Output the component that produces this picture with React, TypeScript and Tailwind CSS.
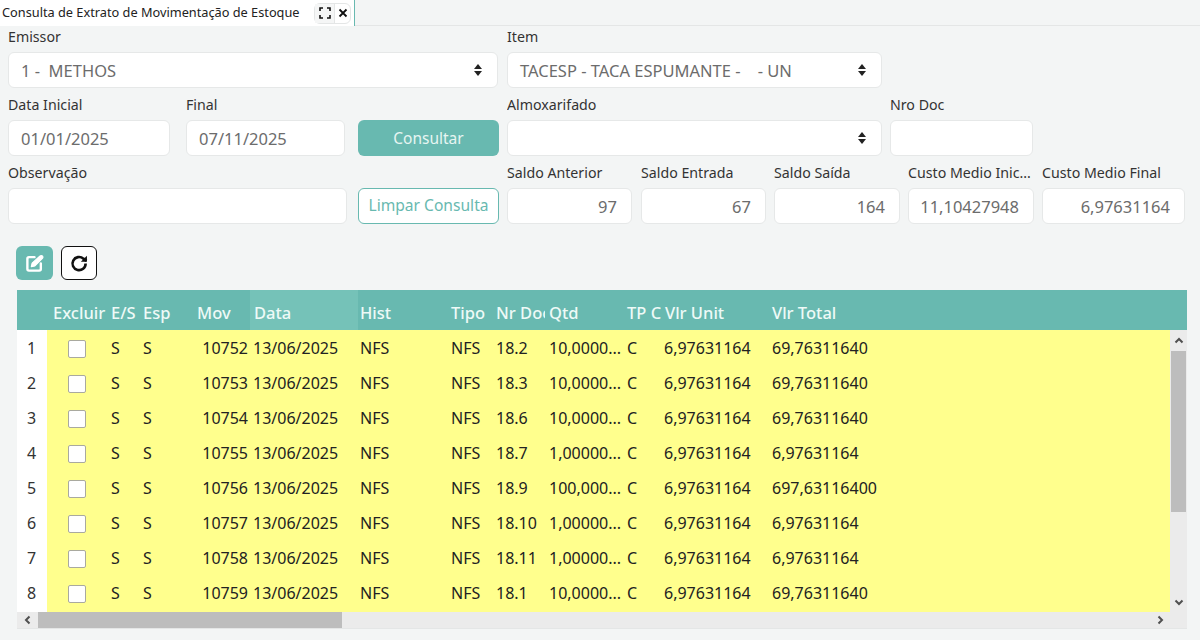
import React from "react";

const font = { fontFamily: '"Noto Sans", "Open Sans", sans-serif' };

const rows = [
  ["1", "10752", "18.2", "10,0000...", "69,76311640"],
  ["2", "10753", "18.3", "10,0000...", "69,76311640"],
  ["3", "10754", "18.6", "10,0000...", "69,76311640"],
  ["4", "10755", "18.7", "1,00000...", "6,97631164"],
  ["5", "10756", "18.9", "100,000...", "697,63116400"],
  ["6", "10757", "18.10", "1,00000...", "6,97631164"],
  ["7", "10758", "18.11", "1,00000...", "6,97631164"],
  ["8", "10759", "18.1", "10,0000...", "69,76311640"],
];

const gridCols =
  "grid grid-cols-[30px_60px_32px_54px_57px_108px_89px_45px_53px_78px_38px_107px_1fr]";

const SortIcon = () => (
  <svg width="10" height="14" viewBox="0 0 10 14" className="fill-[#222]">
    <path d="M5 1 9 6H1z" />
    <path d="M5 13 1 8h8z" />
  </svg>
);

const Label = ({ text }: { text: string }) => (
  <div className="h-6 text-[14.2px] leading-[18px] text-[#333] whitespace-nowrap overflow-hidden">{text}</div>
);

const Input = ({ value, right, select }: { value?: string; right?: boolean; select?: boolean }) => (
  <div
    className={`h-9 flex items-center justify-between bg-white border border-[#e6e8e8] rounded-md pl-3 pr-3.5 text-[16.5px] text-[#6c6c6c] whitespace-pre ${
      right ? "justify-end" : ""
    }`}
  >
    <span className="pt-0.5">{value}</span>
    {select && <SortIcon />}
  </div>
);

const Field = ({
  label,
  value,
  right,
  select,
  className,
}: {
  label: string;
  value?: string;
  right?: boolean;
  select?: boolean;
  className: string;
}) => (
  <div className={className}>
    <Label text={label} />
    <Input value={value} right={right} select={select} />
  </div>
);

const Chevron = ({ d, className }: { d: string; className: string }) => (
  <div className={`flex items-center justify-center bg-[#ebebeb] ${className}`}>
    <svg width="12" height="12" viewBox="0 0 12 12" fill="none" stroke="#505050" strokeWidth="2">
      <path d={d} />
    </svg>
  </div>
);

export default function App() {
  return (
    <div style={font} className="w-[1200px] h-[640px] overflow-hidden bg-[#f3f5f5] text-[#222]">
      <div className="flex h-[26px] border-b border-[#e4e6e6]">
        <div className="w-[355px] h-[26px] bg-white border-r border-[#68b9b0] flex items-center pl-0.5">
          <span className="w-[312px] text-[12.75px] whitespace-nowrap">Consulta de Extrato de Movimentação de Estoque</span>
          <div className="flex h-[21px] w-[37px] border border-[#e4e6e6] rounded-md bg-white">
            <div className="w-5 flex items-center justify-center border-r border-[#e4e6e6] bg-[#f5f6f6]">
              <svg width="12" height="12" viewBox="0 0 12 12" fill="none" stroke="#111" strokeWidth="1.6">
                <path d="M1 4V1h3M8 1h3v3M11 8v3H8M4 11H1V8" />
              </svg>
            </div>
            <div className="flex-1 flex items-center justify-center">
              <svg width="10" height="10" viewBox="0 0 10 10" fill="none" stroke="#111" strokeWidth="1.8">
                <path d="M1.5 1.5l7 7M8.5 1.5l-7 7" />
              </svg>
            </div>
          </div>
        </div>
      </div>

      <div className="pl-2 pt-0.5 flex flex-col gap-2">
        <div className="flex">
          <Field label="Emissor" value="1 -  METHOS" select className="w-[490px] mr-[9px]" />
          <Field label="Item" value="TACESP - TACA ESPUMANTE -    - UN" select className="w-[375px]" />
        </div>
        <div className="flex">
          <Field label="Data Inicial" value="01/01/2025" className="w-[162px] mr-4" />
          <Field label="Final" value="07/11/2025" className="w-[159px] mr-[13px]" />
          <div className="w-[141px] mr-2 pt-6">
            <div className="h-9 flex items-center justify-center rounded-md bg-[#68b9b0] pt-0.5 text-[15.5px] text-[#e6f5f2]">Consultar</div>
          </div>
          <Field label="Almoxarifado" select className="w-[375px] mr-2" />
          <Field label="Nro Doc" className="w-[143px]" />
        </div>
        <div className="flex">
          <Field label="Observação" className="w-[339px] mr-[11px]" />
          <div className="w-[141px] mr-2 pt-6">
            <div className="h-9 flex items-center justify-center rounded-md bg-white border border-[#68b9b0] text-[15.6px] text-[#68b9b0] whitespace-nowrap">Limpar Consulta</div>
          </div>
          <Field label="Saldo Anterior" value="97" right className="w-[125px] mr-[9px]" />
          <Field label="Saldo Entrada" value="67" right className="w-[125px] mr-2" />
          <Field label="Saldo Saída" value="164" right className="w-[126px] mr-2" />
          <Field label="Custo Medio Inic..." value="11,10427948" right className="w-[126px] mr-2" />
          <Field label="Custo Medio Final" value="6,97631164" right className="w-[143px]" />
        </div>
      </div>

      <div className="flex gap-2 pl-4 pt-[22px]">
        <div className="w-[37px] h-[34px] rounded-md bg-[#68b9b0] flex items-center justify-center">
          <svg width="19" height="19" viewBox="0 0 24 24" fill="none" stroke="#fff" strokeWidth="3" strokeLinecap="round" strokeLinejoin="round">
            <path d="M12 4H5a2 2 0 0 0-2 2v13a2 2 0 0 0 2 2h13a2 2 0 0 0 2-2v-7" />
            <path d="M19 2.500a2.100 2.100 0 0 1 3 3L12.500 15 8 16l1-4.500z" fill="#fff" stroke="#fff" strokeWidth="1.500" />
          </svg>
        </div>
        <div className="w-9 h-[34px] rounded-md bg-white border border-[#111] flex items-center justify-center">
          <svg width="21" height="21" viewBox="0 0 24 24" fill="none" stroke="#111" strokeWidth="3">
            <path d="M19 12a7.500 7.500 0 1 1-2.500-5.500L20 9" />
            <path d="M20.500 3v7h-7" fill="#111" stroke="none" />
          </svg>
        </div>
      </div>

      <div className="ml-[17px] mt-2.5 w-[1170px] border-b border-[#e4e6e6]">
        <div className={`${gridCols} h-10 bg-[#68b9b0] items-center text-[16.5px] font-medium text-[#eefaf7] whitespace-nowrap [&>*]:pt-1.5`}>
          <div />
          <div className="pl-1.5 overflow-hidden">Excluir</div>
          <div className="pl-1 overflow-hidden">E/S</div>
          <div className="pl-1 overflow-hidden">Esp</div>
          <div className="pl-1 overflow-hidden">Mov</div>
          <div className="h-full flex items-center pl-1 bg-[#75c2b8]">Data</div>
          <div className="pl-0.5 overflow-hidden">Hist</div>
          <div className="pl-1 overflow-hidden">Tipo</div>
          <div className="pl-1 overflow-hidden">Nr Doc</div>
          <div className="pl-1 overflow-hidden">Qtd</div>
          <div className="pl-1 overflow-hidden">TP C</div>
          <div className="pl-1 overflow-hidden">Vlr Unit</div>
          <div className="pl-1 overflow-hidden">Vlr Total</div>
        </div>

        <div className="flex h-[298px]">
          <div className="w-[1153px] flex flex-col">
            <div className="h-[282px] overflow-hidden bg-[#ffff8d]">
              {rows.map((r) => (
                <div key={r[0]} className={`${gridCols} h-[35px] items-center text-[16px] text-[#222] whitespace-nowrap`}>
                  <div className="h-full bg-white flex items-center pl-2.5 text-[#333]">{r[0]}</div>
                  <div className="pl-[21px] pt-0.5">
                    <div className="w-[18px] h-[18px] bg-white border border-[#a9a99f] rounded-[2px]" />
                  </div>
                  <div className="pl-1">S</div>
                  <div className="pl-1">S</div>
                  <div className="text-right pr-0.5">{r[1]}</div>
                  <div className="pl-[3px]">13/06/2025</div>
                  <div className="pl-0.5">NFS</div>
                  <div className="pl-1">NFS</div>
                  <div className="pl-1">{r[2]}</div>
                  <div className="pl-1">{r[3]}</div>
                  <div className="pl-1">C</div>
                  <div className="pl-[3px]">6,97631164</div>
                  <div className="pl-1">{r[4]}</div>
                </div>
              ))}
              <div className="h-[2px] w-[30px] bg-white" />
            </div>
            <div className="h-4 bg-[#ebebeb] flex">
              <Chevron d="M7.500 2.500 4 6l3.500 3.500" className="w-[21px]" />
              <div className="w-[304px] bg-[#bdbdbd]" />
              <div className="flex-1" />
              <Chevron d="M4.500 2.500 8 6l-3.500 3.500" className="w-[21px]" />
            </div>
          </div>
          <div className="w-[17px] flex flex-col bg-[#ebebeb]">
            <Chevron d="M2.500 7.500 6 4l3.500 3.500" className="h-[21px] w-full" />
            <div className="h-[161px] mx-px bg-[#bdbdbd]" />
            <div className="flex-1" />
            <Chevron d="M2.500 4.500 6 8l3.500-3.500" className="h-[21px] w-full mb-4" />
          </div>
        </div>
      </div>
    </div>
  );
}
